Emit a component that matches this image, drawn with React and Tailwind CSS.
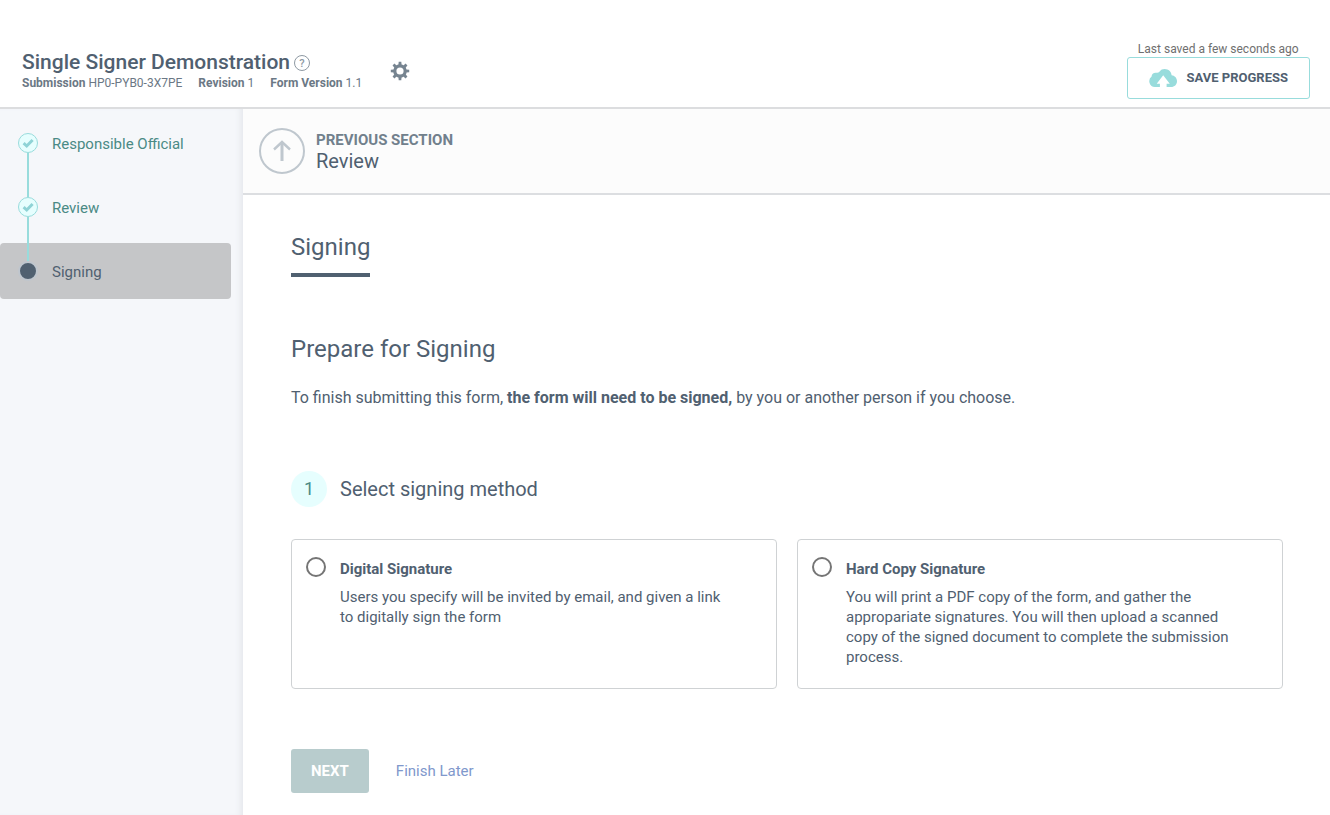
import React, { useState } from 'react';
import clsx from 'clsx';

const sections = [
  { name: 'Responsible Official', done: true },
  { name: 'Review', done: true },
  { name: 'Signing', done: false },
];

const methods = [
  {
    id: 'digital',
    title: 'Digital Signature',
    text: 'Users you specify will be invited by email, and given a link to digitally sign the form',
  },
  {
    id: 'hard-copy',
    title: 'Hard Copy Signature',
    text: 'You will print a PDF copy of the form, and gather the appropariate signatures. You will then upload a scanned copy of the signed document to complete the submission process.',
  },
];

const teeth = [0, 45, 90, 135, 180, 225, 270, 315];

const GearIcon = () => (
  <svg viewBox="0 0 20 20" className="size-5" fill="currentColor" aria-hidden="true">
    <circle cx="10" cy="10" r="5.2" fill="none" stroke="currentColor" strokeWidth="3.2" />
    {teeth.map((angle) => (
      <path key={angle} d="M8.4 4 8.7 .8h2.600l.3 3.200z" transform={`rotate(${angle} 10 10)`} />
    ))}
  </svg>
);

const CloudUploadIcon = () => (
  <svg viewBox="0 0 28 20" className="h-5 w-7" aria-hidden="true">
    <path
      fill="#98dcdc"
      d="M5.800 19A5.800 5.800 0 0 1 2.600 8.600C2.600 6.200 4.800 4.400 7.300 4.800 8.600 4.600 9.800 5 10.600 3.600 11.700 1.800 13.600 1 15.600 1c4 0 6.800 2.800 7 6.300C25.600 7.600 28 10 28 13.200c0 3.300-2.600 5.800-5.900 5.800H17.600v-3.200h3.200L14.200 7.200 7.700 15.800h3.200V19z"
    />
  </svg>
);

const CheckIcon = () => (
  <svg viewBox="0 0 12 12" className="size-3 shrink-0" aria-hidden="true">
    <path d="M1.600 6.200 4.700 9 10.600 3" fill="none" stroke="#8fd3d6" strokeWidth="3" />
  </svg>
);

const ArrowUpIcon = () => (
  <svg viewBox="0 0 24 24" className="size-6" fill="none" stroke="#bfc7ce" aria-hidden="true">
    <path d="M12 22V3" strokeWidth="3" />
    <path d="M4 10.500 12 3l8 7.500" strokeWidth="2.400" />
  </svg>
);

const Header = () => (
  <header className="flex h-[109px] justify-between border-b-2 border-[#dcdddf] pr-5 pl-[22px]">
    <div className="flex gap-7 pt-[50px]">
      <div>
        <div className="flex items-center gap-1">
          <h1 className="text-[21px] leading-6 font-medium text-[#506070]">Single Signer Demonstration</h1>
          <button
            aria-label="Help"
            className="mt-0.5 flex size-4 items-center justify-center rounded-full border border-[#8e99a3] text-[11px] leading-none font-medium text-[#8e99a3]"
          >
            ?
          </button>
        </div>
        <p className="flex gap-4 text-[12px] leading-[18px] text-[#6b7885]">
          <span><b className="font-bold">Submission</b> HP0-PYB0-3X7PE</span>
          <span><b className="font-bold">Revision</b> 1</span>
          <span><b className="font-bold">Form Version</b> 1.1</span>
        </p>
      </div>
      <button aria-label="Settings" className="mt-[11px] size-5 text-[#768490]">
        <GearIcon />
      </button>
    </div>
    <div className="flex flex-col items-center pt-[41px]">
      <p className="text-[12px] leading-4 text-[#6f6f6f]">Last saved a few seconds ago</p>
      <button className="flex h-[42px] items-center gap-2.5 rounded-[3px] border border-[#98dcdc] px-[21px] text-[13px] font-bold text-[#506070]">
        <CloudUploadIcon />
        SAVE PROGRESS
      </button>
    </div>
  </header>
);

const Sidebar = () => (
  <aside className="w-[243px] shrink-0 bg-[#f5f7fa] pt-1.5 shadow-[inset_-6px_0_6px_-4px_#e3e5ea]">
    <ul className="flex flex-col gap-2">
      {sections.map((section) => (
        <li key={section.name} className="relative pr-3">
          <a
            href="#"
            className={clsx(
              'flex h-14 items-center gap-3.5 rounded-sm pl-[18px] text-[15px]',
              section.done ? 'text-[#4a8a85]' : 'bg-[#c5c6c8] text-[#506070]'
            )}
          >
            {section.done ? (
              <span className="flex size-5 items-center justify-center rounded-full border border-[#98dcdc] bg-[#e6fefe]">
                <CheckIcon />
              </span>
            ) : (
              <span className="size-5 rounded-full border-2 border-[#bfc6ce] bg-[#506070]" />
            )}
            <span className="pt-0.5">{section.name}</span>
          </a>
          {/* Line down to the next section, over its background */}
          {section.done && <span className="absolute top-[38px] left-[27px] z-10 h-11 w-0.5 bg-[#98dcdc]" />}
        </li>
      ))}
    </ul>
  </aside>
);

const MethodCard = ({ method, checked, onSelect }) => (
  <label
    htmlFor={method.id}
    className="flex min-h-[150px] gap-3.5 rounded-sm border border-[#cfd2d4] pt-[17px] pr-10 pb-5 pl-3.5"
  >
    <input
      id={method.id}
      type="radio"
      name="method"
      checked={checked}
      onChange={() => onSelect(method.id)}
      className="size-5 shrink-0 appearance-none rounded-full border-2 border-[#757575] checked:border-[6px]"
    />
    <span className="text-[15px] leading-5 text-[#506070]">
      <span className="mt-0.5 mb-2 block font-bold">{method.title}</span>
      <span className="block">{method.text}</span>
    </span>
  </label>
);

const App = () => {
  const [method, setMethod] = useState(null);

  return (
    <div className="flex min-h-screen flex-col bg-white font-['Roboto',sans-serif]">
      <Header />
      <div className="flex flex-1">
        <Sidebar />
        <main className="min-w-0 flex-1">
          <a href="#" className="flex h-[86px] items-center gap-[11px] border-b-2 border-[#dcdee1] bg-[#fcfcfc] pl-4">
            <span className="flex size-[46px] items-center justify-center rounded-full border-2 border-[#bfc7ce]">
              <ArrowUpIcon />
            </span>
            <span>
              <span className="block text-[15px] leading-5 font-bold text-[#71808c]">PREVIOUS SECTION</span>
              <span className="block text-xl leading-[22px] text-[#506070]">Review</span>
            </span>
          </a>

          <div className="pt-9 pr-[47px] pb-[22px] pl-12 text-[#506070]">
            <h2 className="inline-block border-b-4 border-[#506070] pb-2.5 text-[24px] leading-8">Signing</h2>
            <h3 className="mt-14 text-[24px] leading-8">Prepare for Signing</h3>
            <p className="mt-[21px] text-[16px] leading-6">
              To finish submitting this form, <b className="font-bold">the form will need to be signed,</b> by you or
              another person if you choose.
            </p>

            <div className="mt-[61px] flex items-center gap-[13px]">
              <span className="flex size-9 items-center justify-center rounded-full bg-[#e6fefe] text-lg text-[#4a8a85]">
                1
              </span>
              <h4 className="text-xl leading-6">Select signing method</h4>
            </div>

            <div className="mt-8 grid grid-cols-2 gap-5">
              {methods.map((item) => (
                <MethodCard key={item.id} method={item} checked={method === item.id} onSelect={setMethod} />
              ))}
            </div>

            <div className="mt-[60px] flex items-center gap-[27px]">
              <button className="h-11 rounded-[3px] bg-[#b8cccd] px-5 text-[15px] font-bold text-white">NEXT</button>
              <a href="#" className="text-[15px] text-[#8098cc]">
                Finish Later
              </a>
            </div>
          </div>
        </main>
      </div>
    </div>
  );
};

export default App;
